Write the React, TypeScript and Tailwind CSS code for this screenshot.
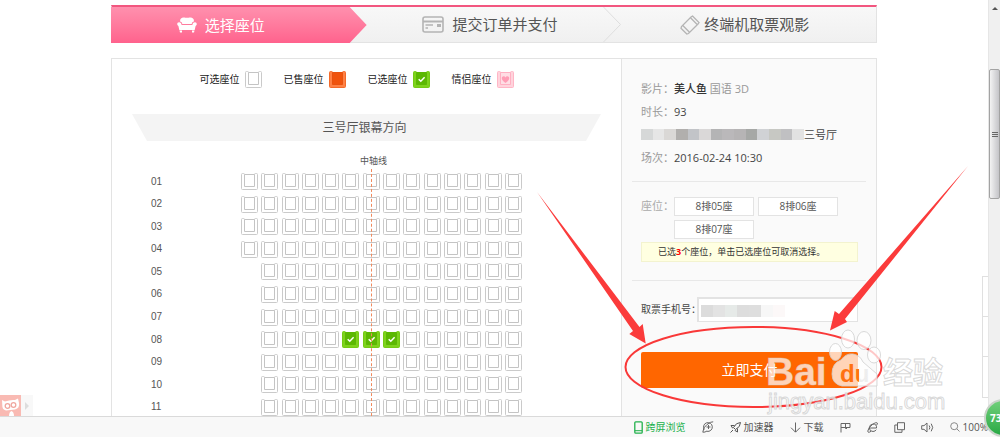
import { useState } from 'react';
import clsx from 'clsx';

type SeatKind = 'free' | 'sold' | 'selected' | 'couple';

const ROWS = ['01', '02', '03', '04', '05', '06', '07', '08', '09', '10', '11'];
const COLS = Array.from({ length: 14 }, (_, i) => i);

const LEGEND: { label: string; kind: SeatKind }[] = [
  { label: '可选座位', kind: 'free' },
  { label: '已售座位', kind: 'sold' },
  { label: '已选座位', kind: 'selected' },
  { label: '情侣座位', kind: 'couple' },
];

const SEAT_COLORS: Record<SeatKind, { body: string; line: string; cushion: string; edge: string }> = {
  free: { body: '#ffffff', line: '#cacaca', cushion: '#ffffff', edge: '#c4c4c4' },
  sold: { body: '#ff8145', line: '#f26a2a', cushion: '#f0530d', edge: '#e8520f' },
  selected: { body: '#7ed31c', line: '#74ca14', cushion: '#5cb803', edge: '#5cb803' },
  couple: { body: '#ffd3dc', line: '#ffb6c6', cushion: '#ffdde4', edge: '#ffb0c2' },
};

function SeatIcon({ kind }: { kind: SeatKind }) {
  const c = SEAT_COLORS[kind];
  return (
    <svg viewBox="0 0 17 17" className="block size-[17px]" aria-hidden="true">
      <path
        d="M.5 1.5Q.5.5 1.5.5H2.5Q3.5.5 3.5 1.5H13.5Q13.5.5 14.5.5H15.5Q16.5.5 16.5 1.5V15.5Q16.5 16.5 15.5 16.5H1.5Q.5 16.5.5 15.5Z"
        fill={c.body}
        stroke={c.line}
      />
      <path d="M3.5 1.5V13.5H13.5V1.5Z" fill={c.cushion} stroke={c.edge} />
      {kind === 'selected' && <path d="M5.7 8.2 7.8 10.2 11.6 6.3" fill="none" stroke="#fff" strokeWidth="1.5" />}
      {kind === 'couple' && (
        <path d="M8.5 12C5.5 9.8 4.8 8.5 4.8 7.2 4.8 5.2 7.5 4.6 8.5 6.6 9.5 4.6 12.2 5.2 12.2 7.2 12.2 8.5 11.5 9.8 8.5 12Z" fill="#ff9db5" />
      )}
    </svg>
  );
}

function SofaIcon() {
  return (
    <svg viewBox="0 0 20 16" className="h-4 w-5" fill="#fff" aria-hidden="true">
      <path d="M3 4.5C3 1.5 4.5.5 6.5.5 8 .5 9 .8 10 .8S12 .5 13.5.5C15.5.5 17 1.5 17 4.5 15.5 4.7 15 5.7 14.7 7H5.3C5 5.7 4.5 4.7 3 4.5Z" />
      <path d="M2 5.3C3.8 5.3 4.3 6.4 4.6 8H15.4C15.7 6.4 16.2 5.3 18 5.3 20 5.3 20.5 8 18.6 9L17.7 13H2.3L1.4 9C-.5 8 0 5.3 2 5.3Z" />
      <path d="M2.5 13.5H5V15.5H3ZM15 13.5H17.5L17 15.5H15Z" />
    </svg>
  );
}

function CardIcon() {
  return (
    <svg viewBox="0 0 22 17" className="h-[17px] w-[22px]" fill="none" stroke="#b4b4b4" aria-hidden="true">
      <rect x="1" y="1" width="20" height="15" rx="2" strokeWidth="1.6" />
      <path d="M1 5.5H21" strokeWidth="2" />
      <path d="M3.5 9H11M3.500 12H6" strokeWidth="1.5" />
      <path d="M15 9.5H19" strokeWidth="3" />
    </svg>
  );
}

function TicketIcon() {
  return (
    <svg viewBox="0 0 20 20" className="size-5" fill="none" stroke="#b4b4b4" strokeWidth="1.3" aria-hidden="true">
      <path d="M12.5 1 19 7.5 18 9 8.5 18.5 6.8 19 1 13.2 1.5 11.5 11 2Z" />
      <path d="M10.5 2.8 17.2 9.5M2.8 10.5 9.5 17.2" />
    </svg>
  );
}

function Steps() {
  return (
    <ol className="grid h-[38px] grid-cols-3 border border-t-2 border-[#e3e3e3] border-t-[#f2567f] bg-linear-to-b from-[#f8f8f8] to-[#f0f0f0] text-[15px] text-[#555]">
      <li className="-mb-px -ml-px flex items-center justify-center gap-2 bg-linear-to-b from-[#ff90ae] to-[#ff628d] pr-9 text-white [clip-path:polygon(0_0,calc(100%-17px)_0,100%_50%,calc(100%-17px)_100%,0_100%)]">
        <SofaIcon />
        选择座位
      </li>
      <li className="relative flex items-center justify-center gap-2 pr-2">
        <CardIcon />
        提交订单并支付
        <svg viewBox="0 0 18 35" className="absolute inset-y-0 right-0 h-full w-[18px]" fill="none" stroke="#dedede" aria-hidden="true">
          <path d="M.5 0 17.5 17.5.5 35" />
        </svg>
      </li>
      <li className="flex items-center justify-center gap-1 pr-2">
        <TicketIcon />
        终端机取票观影
      </li>
    </ol>
  );
}

function SeatMap({ selected, onToggle }: { selected: string[]; onToggle: (id: string) => void }) {
  return (
    <section className="flex min-w-0 flex-1 flex-col pt-3">
      <ul className="flex justify-center gap-[22px] pr-5 text-[10px] leading-[17px] text-[#222]">
        {LEGEND.map((item) => (
          <li key={item.label} className="flex gap-[5px]">
            {item.label}
            <SeatIcon kind={item.kind} />
          </li>
        ))}
      </ul>

      <div className="mx-5 mt-[26px] bg-[#f4f4f4] pr-1 text-center text-xs leading-[27px] text-[#555] [clip-path:polygon(0_0,100%_0,calc(100%-15px)_100%,15px_100%)]">
        三号厅银幕方向
      </div>

      <div className="mt-3 mr-[106px] ml-[120px] text-center text-[9px] leading-4 text-[#555]">中轴线</div>

      <div className="relative mt-1 flex min-h-[240px] flex-1 flex-col justify-between pr-[99px] pl-[39px]">
        {ROWS.map((row, r) => (
          <div key={row} className="flex items-center justify-between">
            <span className="font-['Liberation_Sans',sans-serif] text-[10px] leading-4 text-[#555]">{row}</span>
            <div className="flex w-[281px] justify-between">
              {COLS.map((col) => {
                if (r > 3 && col === 0) return <span key={col} className="size-[17px]" />;
                const id = `${row}-${col}`;
                const on = selected.includes(id);
                return (
                  <button key={col} type="button" aria-label={`${row}排${col}座`} aria-pressed={on} onClick={() => onToggle(id)}>
                    <SeatIcon kind={on ? 'selected' : 'free'} />
                  </button>
                );
              })}
            </div>
          </div>
        ))}
        {/* centre axis runs over the seats */}
        <div className="absolute -top-1 right-[249px] bottom-0 border-l border-dashed border-[#f08a5d]" />
      </div>
    </section>
  );
}

const MOSAIC = [
  'bg-[#d6d8d8]', 'bg-[#e6e6e6]', 'bg-[#dad8d6]', 'bg-[#b1afad]', 'bg-[#c2c4c8]', 'bg-[#dad8d8]', 'bg-[#b4b4b5]',
  'bg-[#bab8ba]', 'bg-[#b6b4b5]', 'bg-[#a6a8a6]', 'bg-[#d0d2d5]', 'bg-[#c7c8c3]', 'bg-[#c0c0c2]', 'bg-[#e2e2e2]',
];

function OrderPanel() {
  return (
    <aside className="w-[255px] shrink-0 border-l border-[#e3e3e3] bg-[#fafafa] px-2.5 pt-[18px]">
      <dl className="pl-[9px] text-[11px] leading-[23px] text-[#444]">
        <div className="flex">
          <dt className="text-[#999]">影片：</dt>
          <dd><strong className="font-medium text-[#333]">美人鱼</strong> <span className="text-[#999]">国语 3D</span></dd>
        </div>
        <div className="flex">
          <dt className="text-[#999]">时长：</dt>
          <dd>93</dd>
        </div>
        <div className="flex items-center">
          <dt className="flex h-[11px] w-[163px]">
            {MOSAIC.map((color, i) => (
              <span key={i} className={clsx('flex-1', color)} />
            ))}
          </dt>
          <dd>三号厅</dd>
        </div>
        <div className="flex">
          <dt className="text-[#999]">场次：</dt>
          <dd>2016-02-24 10:30</dd>
        </div>
      </dl>

      <div className="mt-3 border-t border-[#e8e8e8] pt-[15px] pr-2 pl-[9px]">
        <div className="flex">
          <span className="w-[33px] text-[11px] leading-[18px] text-[#aaa]">座位：</span>
          <ul className="flex flex-1 flex-wrap gap-1 text-center text-[10px] leading-[17px] text-[#555]">
            {['8排05座', '8排06座', '8排07座'].map((seat) => (
              <li key={seat} className="w-20 border border-[#e3e3e3] bg-white">{seat}</li>
            ))}
          </ul>
        </div>
        <p className="mt-[3px] border border-[#f3f3cf] bg-[#ffffe1] pl-4 text-[9px] leading-[18px] text-[#333]">
          已选<b className="text-[#f00]">3</b>个座位，单击已选座位可取消选择。
        </p>
      </div>

      <form className="mt-[18px] border-t border-[#e8e8e8] pt-4 pr-2 pl-[9px]" onSubmit={(e) => e.preventDefault()}>
        <div className="flex items-center">
          <label htmlFor="phone" className="w-14 text-[10px] whitespace-nowrap text-[#444]">取票手机号：</label>
          <div className="relative flex-1">
            <input id="phone" type="tel" className="block h-[25px] w-full border border-t-2 border-l-2 border-[#e3e3e3] bg-white px-2 text-[10px] outline-none" />
            <div className="absolute top-2 left-1 flex h-3 w-[84px]">
              <span className="w-3 bg-[#dcdcdc]" />
              <span className="w-3 bg-[#e3e3e3]" />
              <span className="w-3 bg-[#e6eae8]" />
              <span className="w-3 bg-[#dddddd]" />
              <span className="w-3 bg-[#dedede]" />
              <span className="w-3 bg-[#f7f7f7]" />
              <span className="w-3 bg-[#fcf8f8]" />
            </div>
          </div>
        </div>
        <button type="submit" className="mt-[30px] h-9 w-full rounded-xs bg-[#ff6600] text-sm text-white">立即支付</button>
      </form>
    </aside>
  );
}

function Scrollbar() {
  return (
    <div className="flex w-3 shrink-0 flex-col items-center border-l border-[#e6e6e6] bg-[#f0f0f0] pt-[7px]" aria-hidden="true">
      <span className="border-x-[3px] border-b-[3px] border-x-transparent border-b-[#555]" />
      <div className="mt-[59px] flex h-[130px] w-full flex-col items-center justify-center gap-px rounded-xs border border-[#a3a3a3] bg-linear-to-r from-[#f3f3f3] to-[#c4c4c8]">
        <span className="h-px w-1.5 bg-[#666]" />
        <span className="h-px w-1.5 bg-[#666]" />
        <span className="h-px w-1.5 bg-[#666]" />
      </div>
    </div>
  );
}

function Mascot() {
  return (
    <div className="absolute bottom-0 left-0 flex h-[21px]">
      <svg viewBox="0 0 21 21" className="size-[21px]" aria-hidden="true">
        <rect width="21" height="21" fill="#f9bab3" />
        <path d="M2 5 5 6.5Q10 4.5 15 5L18 3.5 19 8Q20 13 15 14.5L6 15.5Q2 14.5 2.3 10Z" fill="#fff" />
        <path d="M9 21Q9 17 11.5 16 14 17 14 21Z" fill="#fff" />
        <g fill="none" stroke="#f0a79f" strokeWidth="1.3">
          <circle cx="7.5" cy="11" r="2.3" />
          <circle cx="13.5" cy="10" r="2.3" />
        </g>
      </svg>
      <div className="flex w-3 items-center justify-center bg-[#f8f8f8]">
        <span className="border-y-4 border-l-4 border-y-transparent border-l-[#ddd]" />
      </div>
    </div>
  );
}

/* Hand-drawn markers and the site watermark, lying over the page */
function Overlay() {
  return (
    <svg viewBox="0 0 1000 437" className="pointer-events-none absolute top-0 left-0 h-[437px] w-[1000px]" aria-hidden="true">
      <defs>
        <linearGradient id="du" gradientUnits="userSpaceOnUse" x1="840" y1="0" x2="876" y2="0">
          <stop offset=".52" stopColor="#ff6600" />
          <stop offset=".52" stopColor="#ececec" />
        </linearGradient>
      </defs>
      <g fill="#fb3b3b">
        <path d="M537 192 639.5 327 642.7 324 645.7 343.5 629.3 334 633 331Z" />
        <path d="M968 166 845 319 847 322 830 330.5 834.7 311 839 314Z" />
      </g>
      <ellipse cx="753.5" cy="367" rx="128" ry="40" fill="none" stroke="#f93838" strokeWidth="2" />
      <g fill="#fff" fillOpacity=".72" stroke="#cfcfcf" strokeOpacity=".8">
        <ellipse cx="835.5" cy="352" rx="6" ry="8.5" />
        <ellipse cx="848" cy="339" rx="6.5" ry="9" />
        <ellipse cx="864" cy="340.5" rx="7" ry="9" />
        <ellipse cx="874" cy="355" rx="6.5" ry="8" />
        <path d="M832 374Q832 363 841 360 846 353 853 354 860 355 863 362L877 374V386H842Q832 384 832 374Z" />
        <g fontFamily="Liberation Sans, sans-serif" fontWeight="700">
          <text x="766" y="385" fontSize="39" strokeOpacity=".4">Bai</text>
          <text x="840" y="382" fontSize="24" fill="url(#du)" fillOpacity=".9" stroke="none">du</text>
        </g>
        <text x="883" y="383" fontSize="30" fontWeight="700" fontFamily="Noto Sans CJK SC, sans-serif">经验</text>
        <text x="768" y="409" fontSize="22" fontFamily="Liberation Sans, sans-serif">jingyan.baidu.com</text>
      </g>
    </svg>
  );
}

function StatusBar() {
  return (
    <footer className="flex h-[21px] shrink-0 items-center justify-end gap-4 border-t border-[#dadada] bg-[#f8f8f8] pr-3 text-[10px] text-[#555]">
      <button type="button" className="flex items-center gap-[3px] text-[#22b14c]">
        <svg viewBox="0 0 9 13" className="h-[13px] w-[9px]" fill="none" stroke="currentColor" aria-hidden="true">
          <rect x=".8" y=".8" width="7.4" height="11.4" rx="1" strokeWidth="1.3" />
          <path d="M1 9.7H8" />
        </svg>
        跨屏浏览
      </button>
      <button type="button" aria-label="医生">
        <svg viewBox="0 0 12 12" className="size-3" fill="none" stroke="#666" aria-hidden="true">
          <path d="M2.3 8.5A4.4 4.4 0 1 1 5 10.3M.8 11.2Q1 6.5 5 3.5T11.2.8M.8 11.2Q3 11.5 5 10M6.5 4V8M4.5 6H8.5" />
        </svg>
      </button>
      <button type="button" className="flex items-center gap-[3px]">
        <svg viewBox="0 0 11 11" className="size-[11px]" fill="none" stroke="#555" aria-hidden="true">
          <path d="M10.5.5Q6 .5 3.5 5.5L5.5 7.5Q10.5 5 10.5.5ZM4.5 3.5H1L2.500 6H3.200M7.5 6.5V10L5 8.500V8M.5 10.5 3 8" />
        </svg>
        加速器
      </button>
      <button type="button" className="flex items-center gap-[3px]">
        <svg viewBox="0 0 11 11" className="size-[11px]" fill="none" stroke="#666" aria-hidden="true">
          <path d="M5.5.5V10M1 5.7 5.5 10.2 10 5.7" />
        </svg>
        下载
      </button>
      <button type="button" aria-label="标记">
        <svg viewBox="0 0 11 11" className="size-[11px]" fill="none" stroke="#666" aria-hidden="true">
          <path d="M1 10.5V1.5H10V5.5H1M5.5 1.5V6.5H7" />
        </svg>
      </button>
      <button type="button" aria-label="内核">
        <svg viewBox="0 0 11 11" className="size-[11px]" fill="none" stroke="#666" aria-hidden="true">
          <path d="M2.5 6H9.5Q10 2 6 2 2.5 2.3 2.3 6 2.5 9.5 6 9.5 8.5 9.3 9.3 7.7M4 9.3Q.8 11.5.8 9 1.5 5 5.5 2.5 9.5-.3 10.3 1 10.5 2 9.7 3" />
        </svg>
      </button>
      <button type="button" aria-label="窗口">
        <svg viewBox="0 0 11 11" className="size-[11px]" fill="none" stroke="#666" aria-hidden="true">
          <path d="M3.5.7H10.5V7.7H3.5ZM3 3H.8V10.3H8V8" />
        </svg>
      </button>
      <button type="button" aria-label="声音">
        <svg viewBox="0 0 13 11" className="h-[11px] w-[13px]" fill="none" stroke="#666" aria-hidden="true">
          <path d="M.7 3.7H3L6 1V10L3 7.3H.7ZM8.2 3.5Q9.5 5.5 8.2 7.5M10.2 1.7Q13.2 5.5 10.2 9.3" />
        </svg>
      </button>
      <button type="button" className="flex items-center gap-[3px]">
        <svg viewBox="0 0 10 10" className="size-2.5" fill="none" stroke="#888" aria-hidden="true">
          <circle cx="4.2" cy="4.2" r="3.5" />
          <path d="M6.8 6.8 9.5 9.5" />
        </svg>
        100%
      </button>
    </footer>
  );
}

export default function App() {
  const [selected, setSelected] = useState<string[]>(['08-5', '08-6', '08-7']);

  const toggleSeat = (id: string) => {
    setSelected((prev) => (prev.includes(id) ? prev.filter((s) => s !== id) : [...prev, id]));
  };

  return (
    <div lang="zh-CN" className="relative flex h-screen flex-col overflow-hidden bg-white font-['Open_Sans','Noto_Sans_CJK_SC',sans-serif]">
      <div className="flex min-h-0 flex-1">
        <div className="relative min-w-0 flex-1 overflow-hidden">
          <main className="mx-auto flex h-full max-w-[766px] flex-col pt-[5px]">
            <Steps />
            <div className="mt-[15px] flex flex-1 border-x border-t border-[#e3e3e3]">
              <SeatMap selected={selected} onToggle={toggleSeat} />
              <OrderPanel />
            </div>
          </main>
          <div className="absolute top-[276px] right-0 w-1.5 divide-y divide-[#e0e0e0] border-y border-l border-[#e0e0e0]">
            <div className="h-10" />
            <div className="h-10" />
            <div className="h-10" />
          </div>
          <Mascot />
        </div>
        <Scrollbar />
      </div>
      <StatusBar />
      <Overlay />
      <div className="absolute -right-[22px] bottom-0 h-[38px] w-[38px] rounded-full border-2 border-[#c9d3c9] bg-linear-to-b from-[#6fd07a] to-[#25a944] pl-1 text-[10px] leading-[34px] font-bold text-white">
        73
      </div>
    </div>
  );
}
